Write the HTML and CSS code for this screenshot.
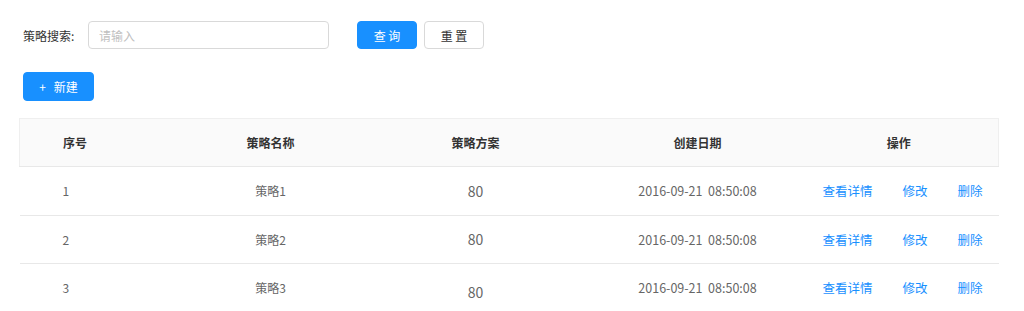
FILE: index.html
```html
<!DOCTYPE html>
<html lang="zh-CN">
  <head>
    <meta charset="UTF-8" />
    <meta name="viewport" content="width=device-width, initial-scale=1.0" />
    <title>策略管理</title>
    <link rel="stylesheet" href="styles.css">
  </head>
  <body>
    <div class="search-bar">
      <label class="search-label" for="keyword">策略搜索:</label>
      <input class="search-input" id="keyword" type="text" placeholder="请输入" />
      <div class="search-actions">
        <button class="btn btn-primary">查 询</button>
        <button class="btn">重 置</button>
      </div>
    </div>

    <div class="toolbar">
      <button class="btn btn-primary btn-new"><span class="plus">+</span>新建</button>
    </div>

    <table class="list">
      <colgroup>
        <col style="width:150px" />
        <col style="width:202px" />
        <col style="width:208px" />
        <col style="width:236px" />
        <col style="width:183px" />
      </colgroup>
      <thead>
        <tr>
          <th class="col-index">序号</th>
          <th>策略名称</th>
          <th>策略方案</th>
          <th>创建日期</th>
          <th class="col-ops">操作</th>
        </tr>
      </thead>
      <tbody>
        <tr>
          <td class="col-index">1</td>
          <td>策略1</td>
          <td class="num">80</td>
          <td class="date">2016-09-21&nbsp;&nbsp;08:50:08</td>
          <td class="ops"><a href="#">查看详情</a><a href="#">修改</a><a href="#">删除</a></td>
        </tr>
        <tr>
          <td class="col-index">2</td>
          <td>策略2</td>
          <td class="num">80</td>
          <td class="date">2016-09-21&nbsp;&nbsp;08:50:08</td>
          <td class="ops"><a href="#">查看详情</a><a href="#">修改</a><a href="#">删除</a></td>
        </tr>
        <tr>
          <td class="col-index">3</td>
          <td>策略3</td>
          <td class="num"><span class="low">80</span></td>
          <td class="date">2016-09-21&nbsp;&nbsp;08:50:08</td>
          <td class="ops"><a href="#">查看详情</a><a href="#">修改</a><a href="#">删除</a></td>
        </tr>
      </tbody>
    </table>
  </body>
</html>
```

FILE: styles.css
```css
body {
  margin: 0;
  padding: 21px 26px 0 19px;
  font-family: "Noto Sans CJK SC", "Noto Sans", sans-serif;
  font-size: 12px;
  color: #333;
  background: #fff;
}
.search-bar {
  display: flex;
  align-items: center;
  padding-left: 4px;
}
.search-label {
  width: 65px;
  color: #333;
}
.search-input {
  box-sizing: border-box;
  width: 241px;
  height: 28px;
  border: 1px solid #d9d9d9;
  border-radius: 4px;
  padding: 0 10px;
  font-family: inherit;
  font-size: 12px;
  color: #333;
  outline: none;
}
.search-input::placeholder {
  color: #bfbfbf;
}
.search-actions {
  display: flex;
  gap: 7px;
  margin-left: 28px;
}
.btn {
  box-sizing: border-box;
  height: 28px;
  width: 60px;
  border: 1px solid #d9d9d9;
  border-radius: 4px;
  background: #fff;
  color: #333;
  font-family: inherit;
  font-size: 12px;
  padding: 0;
  cursor: pointer;
}
.btn-primary {
  background: #1890ff;
  border-color: #1890ff;
  color: #fff;
}
.toolbar {
  padding: 23px 0 17px 4px;
}
.btn-new {
  width: 71px;
  height: 29px;
}
.plus {
  margin-right: 8px;
}
.list {
  width: 979px;
  border-collapse: collapse;
  table-layout: fixed;
}
.list th,
.list td {
  text-align: center;
  border-bottom: 1px solid #e8e8e8;
  padding: 0;
}
.list th {
  height: 47px;
  background: #fafafa;
  font-weight: bold;
  color: #333;
  border-top: 1px solid #efefef;
}
.list thead tr th:first-child {
  border-left: 1px solid #efefef;
}
.list thead tr th:last-child {
  border-right: 1px solid #efefef;
}
.list td {
  height: 47.5px;
  color: #666;
}
.list .col-index {
  text-align: left;
  padding-left: 43px;
}
.list .col-ops {
  padding-right: 16px;
}
.num {
  font-size: 14px;
}
.low {
  display: inline-block;
  margin-top: 8px;
}
.date {
  font-size: 12.5px;
  color: #777;
}
.list .ops {
  white-space: nowrap;
  text-align: left;
  padding-left: 7px;
}
.ops a {
  color: #1890ff;
  text-decoration: none;
  font-size: 12.5px;
  margin-left: 30px;
}
.ops a:first-child {
  margin-left: 0;
}
```
